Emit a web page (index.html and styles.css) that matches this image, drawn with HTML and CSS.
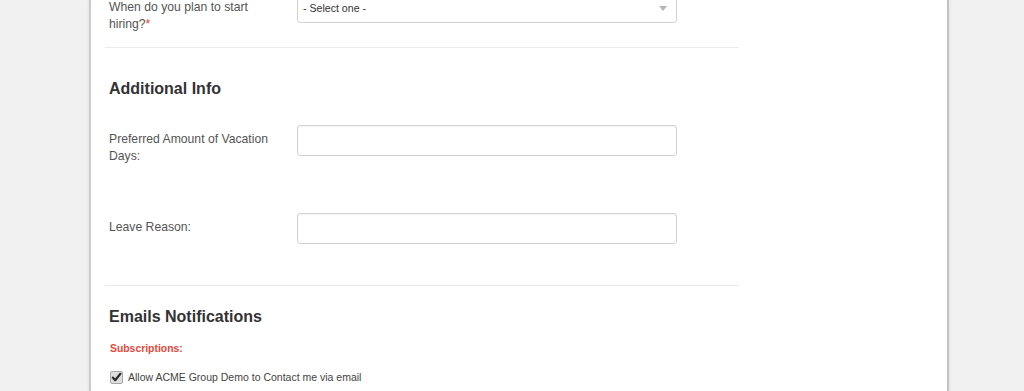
FILE: index.html
```html
<!DOCTYPE html>
<html>
<head>
<meta charset="utf-8">
<link rel="stylesheet" href="styles.css">
</head>
<body>
<div class="page">
  <div class="card">
    <div class="form">
      <div class="row row-first">
        <label class="label label-first">When do you plan to start hiring?<span class="req">*</span></label>
        <div class="select">
          <span>- Select one -</span>
          <span class="arrow"></span>
        </div>
      </div>
      <hr class="sep">
      <h2 class="heading h-additional">Additional Info</h2>
      <div class="row row-vacation">
        <label class="label">Preferred Amount of Vacation Days:</label>
        <div class="input"></div>
      </div>
      <div class="row row-leave">
        <label class="label">Leave Reason:</label>
        <div class="input"></div>
      </div>
      <hr class="sep">
      <h2 class="heading h-emails">Emails Notifications</h2>
      <div class="subs">Subscriptions:</div>
      <div class="check-row">
        <span class="checkbox">
          <svg width="11" height="11" viewBox="0 0 11 11"><path d="M1.8 5.6 L4.2 8.2 L9.4 1.8" fill="none" stroke="#2b2b2b" stroke-width="2.2" stroke-linecap="round" stroke-linejoin="round"/></svg>
        </span>
        <span class="check-text">Allow ACME Group Demo to Contact me via email</span>
      </div>
    </div>
  </div>
</div>
</body>
</html>
```

FILE: styles.css
```css
html, body {
  margin: 0;
  padding: 0;
}
body {
  background: #f0f0f0;
  font-family: "Liberation Sans", Arial, sans-serif;
  overflow: hidden;
  height: 391px;
}
.page {
  display: flex;
  height: 391px;
}
.card {
  margin-left: 89px;
  width: 856px;
  height: 391px;
  background: #fff;
  border-left: 2px solid #cbcbcb;
  border-right: 2px solid #c2c2c2;
  box-shadow: 0 0 3px rgba(0,0,0,0.08);
}
.form {
  margin-left: 14px;
  width: 634px;
  margin-top: -8px;
}
.row {
  display: flex;
  padding-left: 4px;
}
.label {
  width: 188px;
  box-sizing: border-box;
  padding-top: 6px;
  padding-right: 20px;
  font-size: 12.2px;
  line-height: 17px;
  color: #555;
}
.label-first {
  padding-top: 7px;
}
.req {
  color: #e0463a;
}
.row-first {
  height: 55px;
}
.row-vacation {
  height: 88px;
}
.row-leave {
  height: 72px;
}
.select, .input {
  width: 380px;
  height: 31px;
  box-sizing: border-box;
  border: 1px solid #d2d2d2;
  border-radius: 3px;
  background: #fff;
  box-shadow: inset 0 1px 1px rgba(0,0,0,0.05);
}
.select {
  display: flex;
  align-items: center;
  justify-content: space-between;
  padding: 0 9px 0 5px;
  font-size: 10.6px;
  color: #333;
}
.arrow {
  width: 0;
  height: 0;
  border-left: 4px solid transparent;
  border-right: 4px solid transparent;
  border-top: 5px solid #b5b5b5;
  margin-top: 1px;
}
.sep {
  margin: 0;
  border: 0;
  border-top: 1px solid #ebebeb;
}
.heading {
  margin: 0;
  padding-left: 4px;
  font-size: 16px;
  line-height: 20px;
  font-weight: bold;
  color: #333;
}
.h-additional {
  margin-top: 31px;
  margin-bottom: 26px;
}
.h-emails {
  margin-top: 21px;
}
.subs {
  margin-top: 14px;
  padding-left: 5px;
  font-size: 10.4px;
  line-height: 16px;
  font-weight: bold;
  color: #e4473b;
}
.check-row {
  margin-top: 12px;
  padding-left: 5px;
  display: flex;
  align-items: center;
  gap: 5px;
}
.checkbox {
  width: 13px;
  height: 13px;
  box-sizing: border-box;
  border: 1px solid #a8a8a8;
  border-radius: 2px;
  background: #dedede;
  display: flex;
  align-items: center;
  justify-content: center;
}
.check-text {
  font-size: 10.5px;
  line-height: 16px;
  color: #444;
}
```
